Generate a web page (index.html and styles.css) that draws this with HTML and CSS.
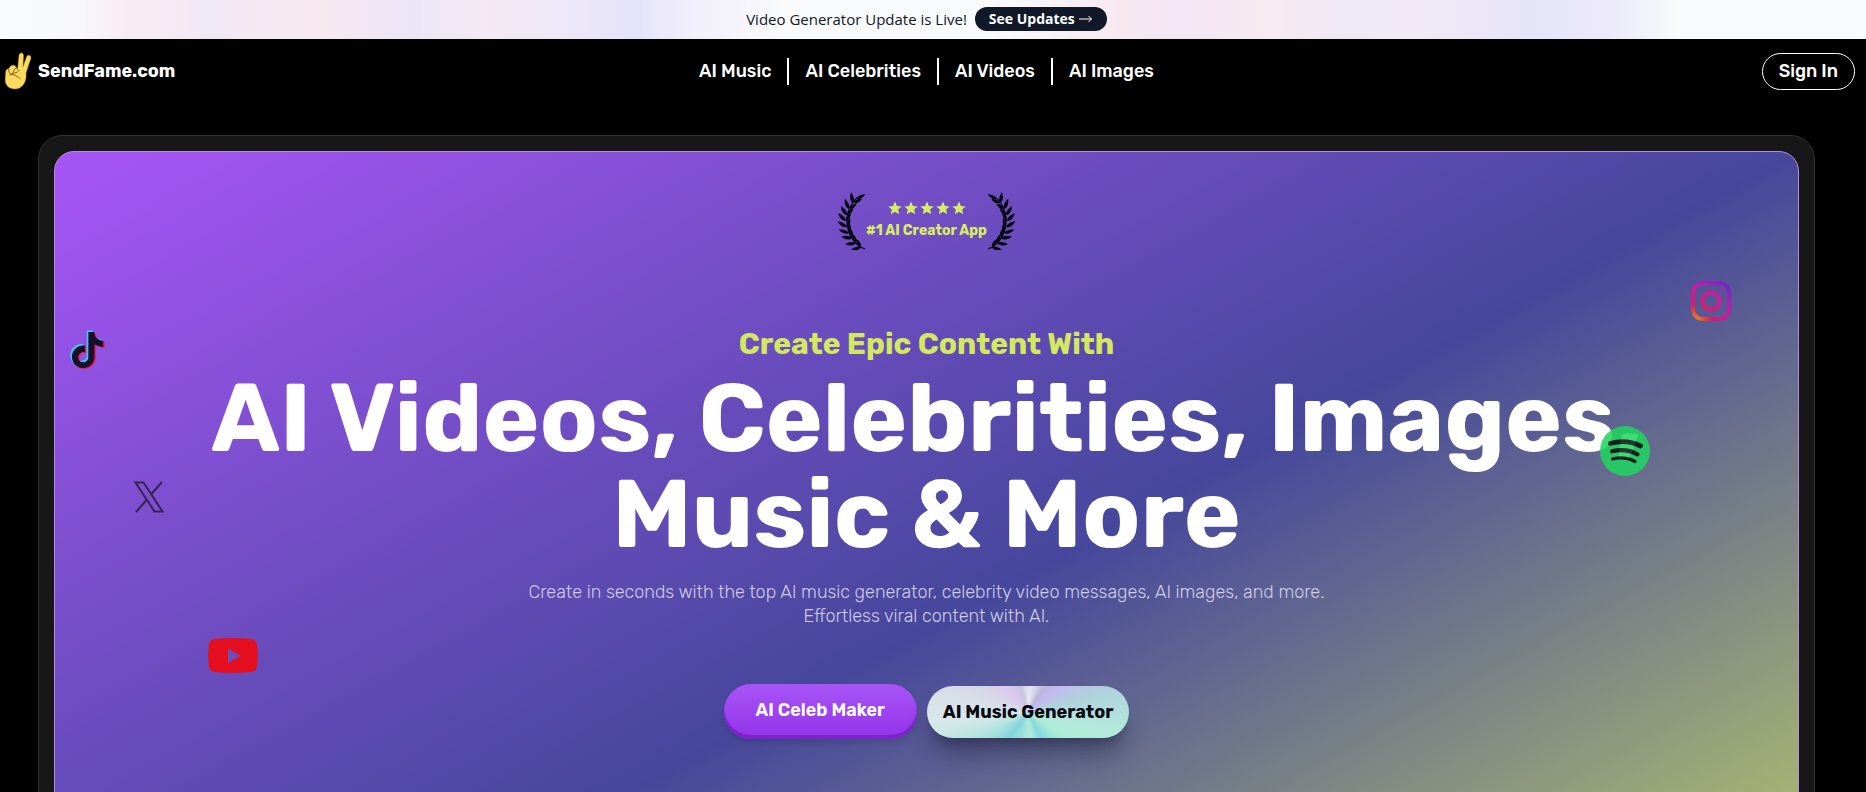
FILE: index.html
```html
<!DOCTYPE html>
<html lang="en">
<head>
<meta charset="utf-8">
<meta name="viewport" content="width=device-width, initial-scale=1">
<title>SendFame.com</title>
<link rel="stylesheet" href="styles.css">
</head>
<body>
<svg class="defs" aria-hidden="true">
  <defs>
    <g id="leaf-pair">
      <path transform="rotate(-46)" d="M0 0C-2.800 -2.500 -2.400 -7 0 -11C2 -7 2.200 -2.500 0 0"/>
      <path transform="rotate(30)" d="M0 0C-2 -2.500 -2 -6 0 -9.500C2.200 -6 2.200 -2.500 0 0"/>
    </g>
    <symbol id="laurel" viewBox="0 0 30 58">
      <path d="M29 57C6 48 6 14 24 4" fill="none" stroke="#06060f" stroke-width="1.200"/>
      <use href="#leaf-pair" transform="translate(25 55) rotate(-62)"/>
      <use href="#leaf-pair" transform="translate(20 51) rotate(-50)"/>
      <use href="#leaf-pair" transform="translate(16 46) rotate(-38)"/>
      <use href="#leaf-pair" transform="translate(13 41) rotate(-26)"/>
      <use href="#leaf-pair" transform="translate(11 35) rotate(-12)"/>
      <use href="#leaf-pair" transform="translate(10 29) rotate(0)"/>
      <use href="#leaf-pair" transform="translate(11 23) rotate(12)"/>
      <use href="#leaf-pair" transform="translate(13 17) rotate(24)"/>
      <use href="#leaf-pair" transform="translate(17 11) rotate(36)"/>
      <path transform="translate(21 7) rotate(60)" d="M0 0C-2 -2.500 -2 -6 0 -9.500C2.200 -6 2.200 -2.500 0 0"/>
    </symbol>
    <symbol id="star" viewBox="0 0 24 24"><path d="M12 1l3.300 7.500 8.200.8-6.200 5.400 1.800 8L12 18.500 4.900 22.700l1.800-8L.5 9.300l8.200-.8z"/></symbol>
    <path id="note" d="M12.525.02c1.31-.02 2.61-.01 3.91-.02.08 1.53.63 3.09 1.75 4.17 1.12 1.11 2.7 1.62 4.24 1.79v4.03c-1.44-.05-2.89-.35-4.2-.97-.57-.26-1.1-.59-1.62-.93-.01 2.92.01 5.84-.02 8.75-.08 1.4-.54 2.79-1.35 3.94-1.31 1.92-3.58 3.17-5.91 3.21-1.43.08-2.86-.31-4.08-1.03-2.02-1.19-3.44-3.37-3.65-5.71-.02-.5-.03-1-.01-1.49.18-1.9 1.12-3.72 2.58-4.96 1.66-1.44 3.98-2.13 6.15-1.72.02 1.48-.04 2.96-.04 4.44-.99-.32-2.15-.23-3.02.37-.63.41-1.11 1.04-1.36 1.75-.21.51-.15 1.07-.14 1.61.24 1.64 1.82 3.02 3.5 2.87 1.12-.01 2.19-.66 2.77-1.61.19-.33.4-.67.41-1.06.1-1.79.06-3.57.07-5.36.01-4.03-.01-8.05.02-12.07z"/>
    <radialGradient id="insta" gradientUnits="userSpaceOnUse" cx="4" cy="40" r="48">
      <stop offset="0" stop-color="#f99a1c"/><stop offset=".2" stop-color="#ee4a28"/><stop offset=".36" stop-color="#e6146c"/><stop offset=".7" stop-color="#d916a0"/><stop offset="1" stop-color="#7c1fd6"/>
    </radialGradient>
  </defs>
</svg>

<div class="banner">
  <span>Video Generator Update is Live!</span>
  <a class="banner-link" href="#updates">See Updates <svg class="arrow" viewBox="0 0 14 8" aria-hidden="true"><path d="M0 4h12.500M9.500 1l3 3-3 3"/></svg></a>
</div>

<header class="topbar">
  <a class="brand" href="#home">
    <svg class="hand" viewBox="0 0 27 38" aria-hidden="true">
      <g fill="#fcdb60" stroke="#b98a25" stroke-width=".5">
        <path d="M13 18L14.500 3.500C14.700 0 19 0 19 3.500L18.500 15L22 5C23.200 2 27.200 3.500 26.300 6.500L21.500 21C22.500 31 17 37 10.500 37C4 37 .5 33 .7 27L1.200 20C1.500 16.500 4 17 4.500 16.500C5.500 13 10 12 11.500 15z"/>
      </g>
      <path d="M4.500 17C4 20 5 22 7 22C9 22 8.500 18 11.500 16M5 23C10 21 14 26 16 27M8 22C9 20 12 22 15 18" fill="none" stroke="#7b5913" stroke-width="1"/>
    </svg>
    <span>SendFame.com</span>
  </a>
  <nav class="menu" aria-label="Main">
    <a href="#music">AI Music</a>
    <a href="#celebrities">AI Celebrities</a>
    <a href="#videos">AI Videos</a>
    <a href="#images">AI Images</a>
  </nav>
  <button class="sign-in" type="button">Sign In</button>
</header>

<main class="frame">
  <section class="hero">
    <div class="award">
      <svg class="laurel" aria-hidden="true"><use href="#laurel"/></svg>
      <div class="award-text">
        <div class="stars" role="img" aria-label="Five stars">
          <svg class="star"><use href="#star"/></svg><svg class="star"><use href="#star"/></svg><svg class="star"><use href="#star"/></svg><svg class="star"><use href="#star"/></svg><svg class="star"><use href="#star"/></svg>
        </div>
        <span>#1 AI Creator App</span>
      </div>
      <svg class="laurel laurel-right" aria-hidden="true"><use href="#laurel"/></svg>
    </div>

    <p class="kicker">Create Epic Content With</p>
    <h1 class="headline">AI Videos, Celebrities, Images,<br>Music &amp; More</h1>
    <p class="lead">Create in seconds with the top AI music generator, celebrity video messages, AI images, and more.<br>Effortless viral content with AI.</p>

    <div class="actions">
      <button class="button button-celeb" type="button">AI Celeb Maker</button>
      <button class="button button-music" type="button">AI Music Generator</button>
    </div>

    <svg class="float tiktok" viewBox="0 0 24 26" aria-hidden="true">
      <use href="#note" x="1.300" y="1.300" fill="#f5165a"/>
      <use href="#note" x="-.7" y="-.3" fill="#3fc8ee"/>
      <use href="#note" x=".4" y=".7" fill="#161129"/>
    </svg>
    <svg class="float x-logo" viewBox="0 0 30 32" aria-hidden="true"><path d="M1.500 1.500h8L28.500 30.500h-8zM28 1L17 13.500M2 31L13 18.500"/></svg>
    <svg class="float youtube" viewBox="0 0 50 35" aria-hidden="true"><path fill-rule="evenodd" d="M7 1Q25 -.8 43 1Q48 1.500 49 6Q50.500 17.500 49 29Q48 33.500 43 34Q25 35.800 7 34Q2 33.500 1 29Q-.5 17.500 1 6Q2 1.500 7 1zM20 10.500V25L32.500 17.800z"/></svg>
    <svg class="float instagram" viewBox="0 0 40 40" aria-hidden="true">
      <g fill="none" stroke="url(#insta)" stroke-width="4"><rect x="2" y="2" width="36" height="36" rx="10"/><circle cx="20" cy="20" r="8.500"/></g>
      <circle cx="30.500" cy="9.500" r="2.300" fill="#9a2cb8"/>
    </svg>
    <svg class="float spotify" viewBox="0 0 50 50" aria-hidden="true">
      <circle cx="25" cy="25" r="25" fill="#1fd65f"/>
      <g fill="none" stroke="#06120b" stroke-linecap="round"><path d="M10.500 17.300Q27 13 40.500 20" stroke-width="4.800"/><path d="M12 25.300Q26 22 37.500 28.300" stroke-width="4.200"/><path d="M12.500 33Q25 30 35 35.500" stroke-width="3.200"/></g>
    </svg>
  </section>
</main>
</body>
</html>
```
FILE: styles.css
```css
* { box-sizing: border-box; }

body {
  margin: 0;
  height: 100vh;
  overflow: hidden;
  background: #000;
  color: #fff;
  font-family: Rubik, Inter, Roboto, sans-serif;
}

a { color: inherit; text-decoration: none; }
button { font: inherit; cursor: pointer; }

.defs { position: absolute; width: 0; height: 0; }

.banner {
  display: flex;
  align-items: center;
  justify-content: center;
  gap: 8px;
  height: 39px;
  padding: 0 13px 1px 0;
  color: #111827;
  font: 400 15px/24px "Open Sans", "Noto Sans", sans-serif;
  background: linear-gradient(90deg, #f9fbfd 0, #f8f8fb 4%, #f8ebf2 7%, #f7eaf3 9%, #f1e8f6 11%, #f5e9f3 14%, #f8e9f0 17%, #f1e6f5 20%, #ebe6f7 22%, #f4e9f4 26%, #eee8f8 30%, #e5e3f9 34%, #f1effb 37%, #f9fafc 42%, #f9fafc 53%, #f7f3f8 56%, #f8e9f0 60%, #f2e6f5 63%, #f8eaf0 68%, #efe8f6 72%, #f1eaf6 76%, #e6e4f9 82%, #ebe9fa 86%, #f8fafc 90%, #f9fbfd 100%);
}

.banner-link {
  display: flex;
  align-items: center;
  gap: 4px;
  height: 24px;
  padding: 0 14px;
  border-radius: 12px;
  background: #111827;
  color: #fff;
  font-size: 14px;
  font-weight: 700;
}

.arrow { width: 14px; height: 8px; fill: none; stroke: #fff; stroke-width: 1; }

.topbar {
  display: grid;
  grid-template-columns: 1fr auto 1fr;
  align-items: center;
  height: 64px;
  padding: 0 11px 0 4px;
  font-size: 18px;
  font-weight: 500;
}

.brand { display: flex; align-items: center; gap: 6px; font-weight: 700; }
.hand { width: 28px; height: 38px; }

.menu { display: flex; align-items: center; padding-right: 6px; }
.menu a { padding: 0 16px; line-height: 27px; }
.menu a + a { border-left: 2px solid #fff; }

.sign-in {
  justify-self: end;
  height: 37px;
  padding: 0 16px;
  border: 1px solid #fff;
  border-radius: 20px;
  background: transparent;
  color: #fff;
}

.frame {
  margin: 32px 51px 0 38px;
  padding: 15px;
  border: 1px solid #303030;
  border-radius: 24px;
  background: #171717;
}

.hero {
  position: relative;
  display: flex;
  flex-direction: column;
  align-items: center;
  min-height: 958px;
  padding: 40px 16px;
  border: 1px solid #b88ae6;
  border-radius: 20px;
  background: linear-gradient(to bottom right, #a855f7, #46479c 50%, #d2e760);
  text-align: center;
}

.award { display: flex; align-items: center; height: 58px; color: #d9ed63; }
.award-text { font-size: 14px; font-weight: 700; line-height: 20px; }
.laurel { width: 30px; height: 58px; overflow: visible; fill: #06060f; }
.laurel-right { transform: scaleX(-1); }
.stars { display: flex; justify-content: center; gap: 2px; padding-bottom: 6px; }
.star { width: 14px; height: 14px; fill: #d9ed63; }

.kicker { margin: 76px 0 0; color: #d4e85f; font-size: 30px; font-weight: 700; line-height: 36px; }
.headline { margin: 8px 0 0; font-size: 96px; font-weight: 700; line-height: 96px; }
.lead { margin: 18px 0 0; color: #d0cde6; font-size: 18px; font-weight: 300; line-height: 24px; }

.actions { display: flex; align-items: center; gap: 10px; margin-top: 56px; }
.button { border: 0; border-radius: 27px; font-size: 18px; white-space: nowrap; }
.button-celeb {
  height: 55px;
  padding: 0 32px 4px;
  color: #fff;
  font-weight: 600;
  background: linear-gradient(#a855f7, #9333ea);
  box-shadow: inset 0 -4px 0 #7e22ce, 0 4px 6px rgba(0, 0, 0, .12);
}
.button-music {
  height: 52px;
  padding: 0 16px;
  color: #080812;
  font-weight: 700;
  background: conic-gradient(from 0deg, #e4e5f2 0 8deg, #b9b7dc 32deg, #c3baf0 52deg, #b0d0dc 74deg, #b2e8dc 100deg, #adeed5 124deg, #85d8df 154deg, #b2ecd8 174deg, #a4e4dc 188deg, #82d4dc 216deg, #b7e5df 246deg, #d9e8ea 265deg, #d7d8e6 294deg, #dbc6ef 323deg, #c9c6dd 344deg, #e4e5f2 360deg);
  box-shadow: 0 20px 25px -5px rgba(20, 20, 40, .4), 0 8px 10px -6px rgba(20, 20, 40, .3);
}

.float { position: absolute; overflow: visible; }
.tiktok { left: 14px; top: 179px; width: 36px; height: 39px; }
.x-logo { left: 79px; top: 329px; width: 30px; height: 32px; fill: none; stroke: #35264f; stroke-width: 2; }
.youtube { left: 153px; top: 486px; width: 50px; height: 35px; fill: #e60f20; }
.instagram { right: 67px; top: 129px; width: 40px; height: 40px; opacity: .9; }
.spotify { right: 148px; top: 274px; width: 50px; height: 50px; opacity: .86; }
```
